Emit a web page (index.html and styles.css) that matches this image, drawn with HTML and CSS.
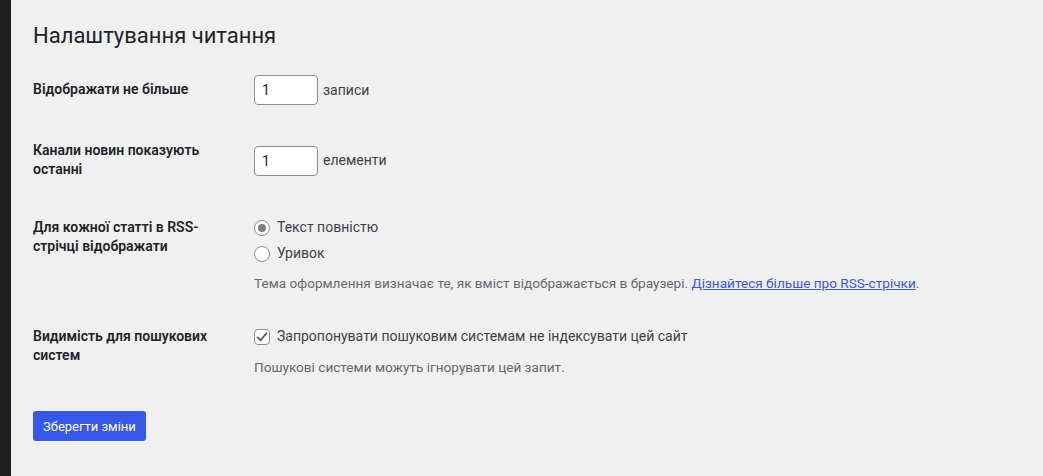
FILE: index.html
```html
<!DOCTYPE html>
<html>

<head>
    <title>Налаштування читання</title>
    <meta charset="UTF-8" />
    <link rel="stylesheet" href="styles.css">
</head>

<body>
    <div class="admin">
        <div class="admin__menu"></div>
        <div class="admin__content">
            <h1 class="admin__title">Налаштування читання</h1>

            <form class="settings">
                <!-- Posts per page -->
                <div class="settings__row settings__row--middle">
                    <label class="settings__label" for="postsPerPage">Відображати не більше</label>
                    <div class="settings__field settings__field--inline">
                        <input type="number" id="postsPerPage" class="settings__number" value="1" />
                        <span>записи</span>
                    </div>
                </div>

                <!-- Feed items -->
                <div class="settings__row settings__row--middle settings__row--feeds">
                    <label class="settings__label" for="postsPerRss">Канали новин показують останні</label>
                    <div class="settings__field settings__field--inline">
                        <input type="number" id="postsPerRss" class="settings__number" value="1" />
                        <span>елементи</span>
                    </div>
                </div>

                <!-- RSS content -->
                <div class="settings__row settings__row--rss">
                    <span class="settings__label">Для кожної статті в RSS-стрічці відображати</span>
                    <div class="settings__field">
                        <label class="settings__choice">
                            <input type="radio" name="rssUseExcerpt" class="settings__radio" checked />
                            <span>Текст повністю</span>
                        </label>
                        <label class="settings__choice settings__choice--next">
                            <input type="radio" name="rssUseExcerpt" class="settings__radio" />
                            <span>Уривок</span>
                        </label>
                        <p class="settings__description">Тема оформлення визначає те, як вміст відображається в браузері. <a href="#">Дізнайтеся більше про RSS-стрічки</a>.</p>
                    </div>
                </div>

                <!-- Search engines -->
                <div class="settings__row settings__row--search">
                    <span class="settings__label">Видимість для пошукових систем</span>
                    <div class="settings__field">
                        <label class="settings__choice">
                            <span class="settings__checkbox">
                                <svg viewBox="0 0 16 16" width="16" height="16">
                                    <path d="M3.6 8.4 L6.6 11.3 L12.4 4.3" fill="none" stroke="#50575e" stroke-width="1.8" stroke-linecap="round" stroke-linejoin="round" />
                                </svg>
                            </span>
                            <span>Запропонувати пошуковим системам не індексувати цей сайт</span>
                        </label>
                        <p class="settings__description settings__description--search">Пошукові системи можуть ігнорувати цей запит.</p>
                    </div>
                </div>

                <button type="submit" class="settings__submit">Зберегти зміни</button>
            </form>
        </div>
    </div>
</body>

</html>
```

FILE: styles.css
```css
:root {
    --bg: #f0f0f1;
    --menu: #1e1e1e;
    --text: #3c434a;
    --heading: #1d2327;
    --muted: #646970;
    --border: #8c8f94;
    --accent: #3858e9;
}

html,
body {
    height: 100%;
}

body {
    margin: 0;
    background-color: var(--bg);
    color: var(--text);
    font-family: Roboto, "Noto Sans", sans-serif;
    font-size: 14px;
    line-height: 19px;
}

.admin {
    display: flex;
    min-height: 100%;
}

.admin__menu {
    width: 11px;
    flex-shrink: 0;
    background-color: var(--menu);
}

.admin__content {
    padding-left: 22px;
}

.admin__title {
    margin: 21px 0 0;
    font-size: 22px;
    font-weight: 400;
    line-height: 30px;
    color: var(--heading);
}

/* Form rows - START */
.settings__row {
    display: grid;
    grid-template-columns: 221px 1fr;
    align-items: start;
    margin-top: 23px;
}

.settings__row--middle {
    align-items: center;
}

.settings__row--feeds {
    margin-top: 36px;
}

.settings__row--rss {
    margin-top: 39px;
}

.settings__row--search {
    margin-top: 34px;
}

.settings__label {
    width: 190px;
    font-weight: 600;
    color: var(--heading);
}

.settings__field--inline {
    display: flex;
    align-items: center;
    gap: 5px;
    padding-top: 1px;
}

.settings__number {
    box-sizing: border-box;
    width: 64px;
    height: 30px;
    padding: 0 7px;
    border: 1px solid var(--border);
    border-radius: 4px;
    background-color: white;
    font: inherit;
    color: var(--heading);
    -moz-appearance: textfield;
}

.settings__number::-webkit-outer-spin-button,
.settings__number::-webkit-inner-spin-button {
    -webkit-appearance: none;
    margin: 0;
}
/* Form rows - END */

/* Choices - START */
.settings__choice {
    display: flex;
    align-items: center;
    gap: 7px;
    height: 19px;
}

.settings__choice--next {
    margin-top: 7px;
}

.settings__radio {
    -webkit-appearance: none;
    appearance: none;
    box-sizing: border-box;
    width: 16px;
    height: 16px;
    margin: 0;
    border: 1px solid var(--border);
    border-radius: 50%;
    background-color: white;
    display: grid;
    place-items: center;
}

.settings__radio:checked::before {
    content: "";
    width: 8px;
    height: 8px;
    border-radius: 50%;
    background-color: #7a7f85;
}

.settings__checkbox {
    box-sizing: border-box;
    width: 16px;
    height: 16px;
    border: 1px solid var(--border);
    border-radius: 4px;
    background-color: white;
    display: grid;
    place-items: center;
}

.settings__checkbox svg {
    display: block;
    margin: -1px;
}

.settings__description {
    margin: 11px 0 0;
    font-size: 13.6px;
    color: var(--muted);
}

.settings__description--search {
    margin-top: 12px;
}

.settings__description a {
    color: var(--accent);
}
/* Choices - END */

.settings__submit {
    display: block;
    margin-top: 34px;
    height: 30px;
    padding: 0 10px;
    border: none;
    border-radius: 3px;
    background-color: var(--accent);
    color: white;
    font: inherit;
    font-size: 13px;
    white-space: nowrap;
    cursor: pointer;
}
```
